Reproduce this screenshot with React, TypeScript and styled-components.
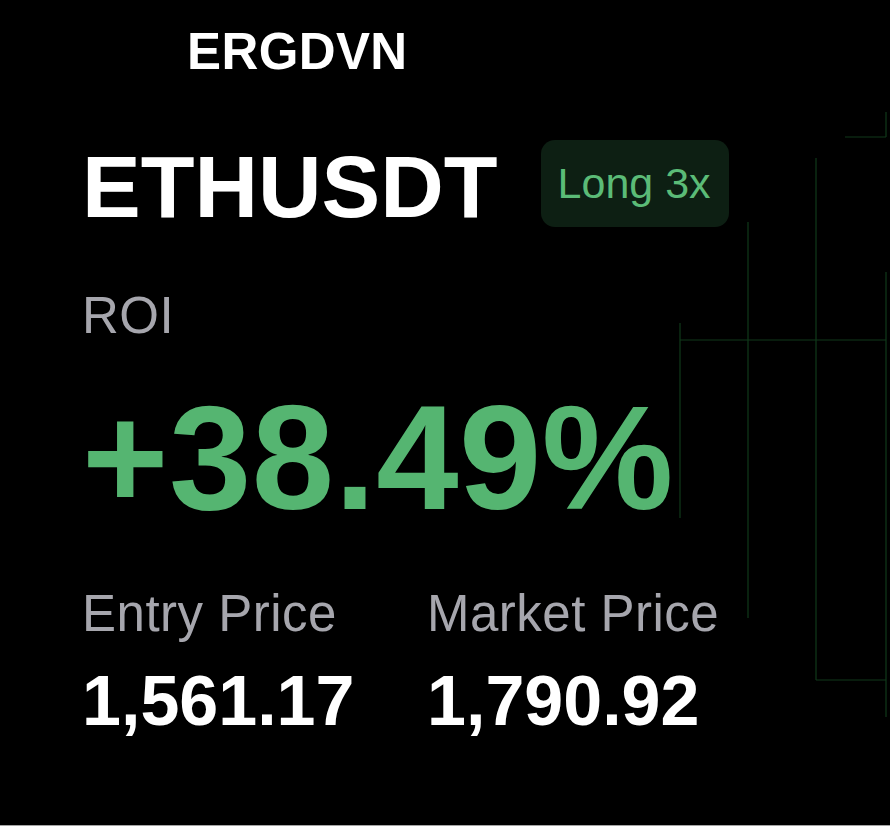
import React from "react";
import styled, { createGlobalStyle } from "styled-components";

const GlobalStyle = createGlobalStyle`
  html, body {
    margin: 0;
    padding: 0;
    background: #a4a4a4;
  }
  body {
    font-family: "Liberation Sans", Arial, Helvetica, sans-serif;
  }
`;

const Card = styled.div`
  position: relative;
  width: 890px;
  height: 825px;
  background: #000;
  overflow: hidden;
  box-sizing: border-box;
  padding: 26px 0 0 82px;
  color: #fff;
`;

const ChartGrid = styled.svg`
  position: absolute;
  inset: 0;
  width: 890px;
  height: 825px;
  pointer-events: none;
`;

const Content = styled.div`
  position: relative;
  z-index: 1;
  display: flex;
  flex-direction: column;
  align-items: flex-start;
`;

const Brand = styled.div`
  margin-left: 105px;
  font-size: 51px;
  line-height: 51px;
  font-weight: 700;
  letter-spacing: 0.4px;
`;

const TitleRow = styled.div`
  display: flex;
  align-items: center;
  gap: 43px;
  margin-top: 63px;
`;

const Symbol = styled.div`
  font-size: 88px;
  line-height: 88px;
  font-weight: 700;
`;

const SideBadge = styled.div`
  display: flex;
  align-items: center;
  height: 87px;
  padding: 0 18px 0 17px;
  margin-bottom: 6px;
  border-radius: 14px;
  background: #0d1f13;
  color: #5bbb77;
  font-size: 43px;
  line-height: 1;
`;

const Label = styled.div<{ $top?: number }>`
  margin-top: ${(p) => p.$top ?? 0}px;
  font-size: 51px;
  line-height: 51px;
  color: #a6a6ad;
  letter-spacing: 0.5px;
`;

const RoiValue = styled.div`
  margin-top: 43px;
  font-size: 148px;
  line-height: 148px;
  font-weight: 700;
  color: #55b571;
  letter-spacing: 0.5px;
`;

const Stats = styled.div`
  display: grid;
  grid-template-columns: 345px auto;
  margin-top: 56px;
`;

const Stat = styled.div`
  display: flex;
  flex-direction: column;
`;

const Price = styled.div`
  margin-top: 26px;
  font-size: 70px;
  line-height: 72px;
  font-weight: 700;
`;

// faint candle grid drawn behind the stats
const gridLines = [
  [680, 323, 680, 518],
  [748, 222, 748, 618],
  [816, 158, 816, 680],
  [886, 272, 886, 717],
  [886, 112, 886, 137],
  [845, 137, 886, 137],
  [680, 340, 886, 340],
  [816, 680, 886, 680],
];

function App() {
  return (
    <>
      <GlobalStyle />
      <Card>
        <ChartGrid viewBox="0 0 890 825">
          {gridLines.map(([x1, y1, x2, y2], i) => (
            <line
              key={i}
              x1={x1}
              y1={y1}
              x2={x2}
              y2={y2}
              stroke="#10391a"
              strokeWidth={1.2}
            />
          ))}
        </ChartGrid>
        <Content>
          <Brand>ERGDVN</Brand>
          <TitleRow>
            <Symbol>ETHUSDT</Symbol>
            <SideBadge>Long 3x</SideBadge>
          </TitleRow>
          <Label $top={57}>ROI</Label>
          <RoiValue>+38.49%</RoiValue>
          <Stats>
            <Stat>
              <Label>Entry Price</Label>
              <Price>1,561.17</Price>
            </Stat>
            <Stat>
              <Label>Market Price</Label>
              <Price>1,790.92</Price>
            </Stat>
          </Stats>
        </Content>
      </Card>
    </>
  );
}

export default App;
